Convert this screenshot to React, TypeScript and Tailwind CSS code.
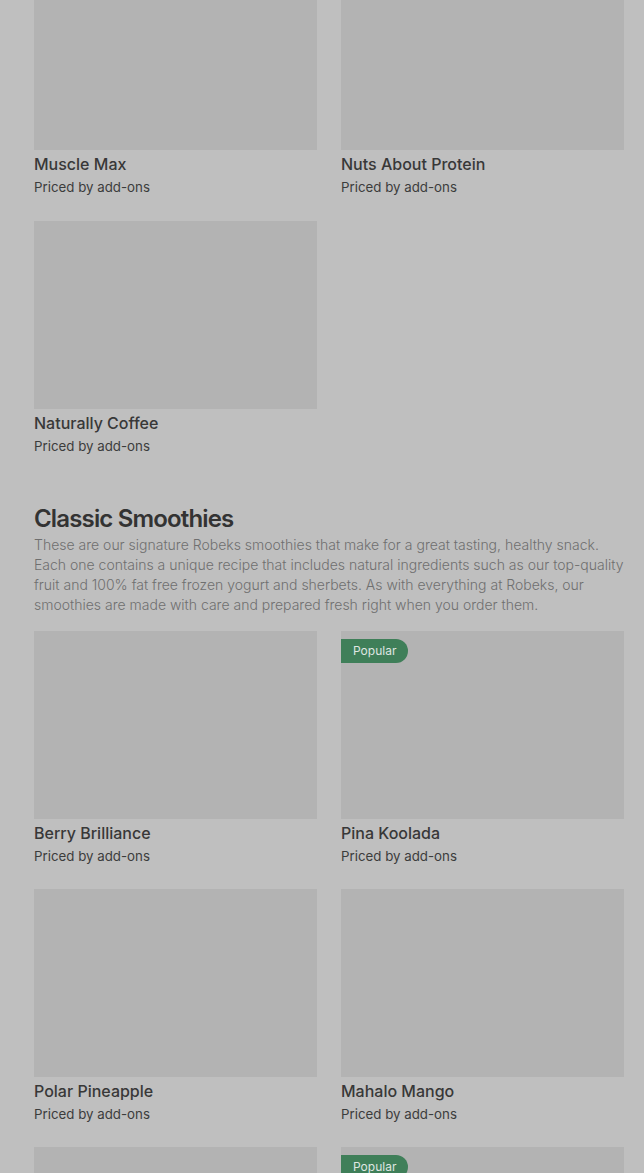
import React from 'react';

interface Item {
  name: string;
  popular?: boolean;
}

const topItems: Item[] = [
  { name: 'Muscle Max' },
  { name: 'Nuts About Protein' },
  { name: 'Naturally Coffee' },
];

const classicItems: Item[] = [
  { name: 'Berry Brilliance' },
  { name: 'Pina Koolada', popular: true },
  { name: 'Polar Pineapple' },
  { name: 'Mahalo Mango' },
  { name: 'Strawberry Wild' },
  { name: 'Pomegranate Passion', popular: true },
];

const ItemCard = ({ item }: { item: Item }) => (
  <div className="flex flex-col">
    <div className="relative h-[188px] bg-[#b3b3b3]">
      {item.popular && (
        <span className="absolute left-0 top-2 flex h-6 items-center rounded-r-full bg-[#3f7f59] pl-3 pr-3 text-[12px] text-[#dfe6e1]">
          Popular
        </span>
      )}
    </div>
    <h3 className="mt-[2px] text-[16px] leading-6 font-medium text-[#383838]">{item.name}</h3>
    <p className="mt-[1px] text-[13.3px] leading-5 text-[#3c3c3c]">Priced by add-ons</p>
  </div>
);

const App = () => {
  return (
    <div
      className="min-h-[1173px] overflow-hidden bg-[#bfbfbf] pl-[34px] pr-[20px]"
      style={{ fontFamily: 'Inter, "Liberation Sans", sans-serif' }}
    >
      <div className="-mt-[38px] grid grid-cols-2 gap-x-6 gap-y-6">
        {topItems.map((item) => (
          <ItemCard key={item.name} item={item} />
        ))}
      </div>

      <section className="mt-12">
        <h2 className="text-[24px] leading-[30px] font-semibold tracking-[-0.035em] text-[#333333]">
          Classic Smoothies
        </h2>
        <p className="mt-[1px] text-[14px] leading-5 font-light text-[#6f6f6f]">
          These are our signature Robeks smoothies that make for a great tasting, healthy snack. Each one
          contains a unique recipe that includes natural ingredients such as our top-quality fruit and 100%
          fat free frozen yogurt and sherbets. As with everything at Robeks, our smoothies are made with
          care and prepared fresh right when you order them.
        </p>
        <div className="mt-4 grid grid-cols-2 gap-x-6 gap-y-[23px]">
          {classicItems.map((item) => (
            <ItemCard key={item.name} item={item} />
          ))}
        </div>
      </section>
    </div>
  );
};

export default App;
